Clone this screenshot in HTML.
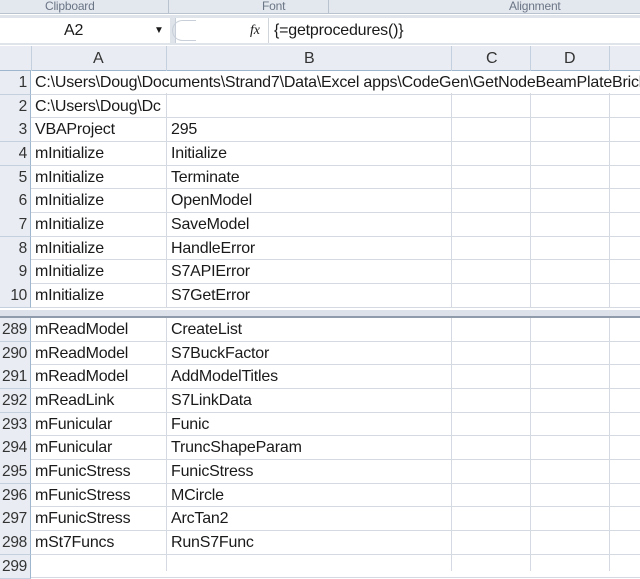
<!DOCTYPE html>
<html><head><meta charset="utf-8"><style>
*{margin:0;padding:0;box-sizing:border-box}
body{width:640px;height:571px;overflow:hidden;background:#fff;position:relative;font-family:"Liberation Sans",sans-serif;color:#1a1a1a}
.a{position:absolute}
.t{position:absolute;font-size:16px;white-space:nowrap;line-height:24px;letter-spacing:-0.2px}
.rh{position:absolute;left:0;width:31px;background:#e9edf3;border-right:1px solid #9eb6ce;border-bottom:1px solid #c5d0de;text-align:right;padding-right:3px;font-size:15.5px;color:#333;line-height:23px;letter-spacing:-0.3px}
.hl{position:absolute;left:31px;right:0;height:1px;background:#d4d9e2}
.vl{position:absolute;width:1px;background:#d4d9e2}
</style></head><body>
<div class="a" style="left:0;top:0;width:640px;height:14px;background:#e3e7ee;border-bottom:1px solid #b9c3d0"></div>
<div class="a" style="left:168px;top:0;width:1px;height:14px;background:#b9c3d0"></div>
<div class="a" style="left:328px;top:0;width:1px;height:14px;background:#b9c3d0"></div>
<div class="t" style="left:45px;top:-6px;font-size:12px;color:#6a7585">Clipboard</div>
<div class="t" style="left:262px;top:-6px;font-size:12px;color:#6a7585">Font</div>
<div class="t" style="left:509px;top:-6px;font-size:12px;color:#6a7585">Alignment</div>
<div class="a" style="left:0;top:15px;width:640px;height:30px;background:#dfe4eb"></div>
<div class="a" style="left:0;top:18px;width:170px;height:25px;background:#fff"></div>
<div class="t" style="left:64px;top:19px">A2</div>
<div class="t" style="left:154px;top:19px;font-size:10px">▼</div>
<div class="a" style="left:175px;top:18px;width:465px;height:25px;background:#fff;border-left:1px solid #c8cfd8"></div>
<div class="a" style="left:172px;top:20px;width:24px;height:21px;border:1px solid #c8cfd8;border-radius:11px 0 0 11px;border-right:none"></div>
<div class="t" style="left:250px;top:19px;font-style:italic;font-family:'Liberation Serif',serif;font-size:14px">fx</div>
<div class="a" style="left:268px;top:18px;width:1px;height:25px;background:#d0d5dc"></div>
<div class="t" style="left:274px;top:19px">{=getprocedures()}</div>
<div class="a" style="left:0;top:46px;width:640px;height:25px;background:#e9edf3;border-bottom:1px solid #9eb6ce"></div>
<div class="a" style="left:31px;top:46px;width:1px;height:25px;background:#c5d0de"></div>
<div class="a" style="left:166px;top:46px;width:1px;height:25px;background:#c5d0de"></div>
<div class="a" style="left:451px;top:46px;width:1px;height:25px;background:#c5d0de"></div>
<div class="a" style="left:530px;top:46px;width:1px;height:25px;background:#c5d0de"></div>
<div class="a" style="left:609px;top:46px;width:1px;height:25px;background:#c5d0de"></div>
<div class="t" style="left:93px;top:47px;color:#333">A</div>
<div class="t" style="left:304px;top:47px;color:#333">B</div>
<div class="t" style="left:486px;top:47px;color:#333">C</div>
<div class="t" style="left:564px;top:47px;color:#333">D</div>
<div class="vl" style="left:166px;top:71px;height:500px"></div>
<div class="vl" style="left:451px;top:71px;height:500px"></div>
<div class="vl" style="left:530px;top:71px;height:500px"></div>
<div class="vl" style="left:609px;top:71px;height:500px"></div>
<div class="a" style="left:0;top:308px;width:640px;height:9px;background:#fff"></div>
<div class="a" style="left:0;top:310px;width:640px;height:7px;background:#dde1ea"></div>
<div class="a" style="left:0;top:316px;width:640px;height:2px;background:#8f9aab"></div>
<div id="g"></div>
<script>
var r1=[["1","C:\\Users\\Doug\\Documents\\Strand7\\Data\\Excel apps\\CodeGen\\GetNodeBeamPlateBrick",""],["2","C:\\Users\\Doug\\Dc",""],["3","VBAProject","295"],["4","mInitialize","Initialize"],["5","mInitialize","Terminate"],["6","mInitialize","OpenModel"],["7","mInitialize","SaveModel"],["8","mInitialize","HandleError"],["9","mInitialize","S7APIError"],["10","mInitialize","S7GetError"]];
var r2=[["289","mReadModel","CreateList"],["290","mReadModel","S7BuckFactor"],["291","mReadModel","AddModelTitles"],["292","mReadLink","S7LinkData"],["293","mFunicular","Funic"],["294","mFunicular","TruncShapeParam"],["295","mFunicStress","FunicStress"],["296","mFunicStress","MCircle"],["297","mFunicStress","ArcTan2"],["298","mSt7Funcs","RunS7Func"],["299","",""]];
var h="",H=23.67;
function add(rows,y0){rows.forEach(function(r,i){var y=y0+i*H;
h+='<div class="rh" style="top:'+y+'px;height:'+(H+0.5)+'px">'+r[0]+'</div>';
h+='<div class="hl" style="top:'+(y+H-1)+'px"></div>';
if(r[0]=="1")h+='<div class="a" style="left:32px;top:'+y+'px;width:608px;height:22px;background:#fff"></div>';
if(r[0]=="2")h+='<div class="a" style="left:32px;top:'+y+'px;width:134px;height:22px;background:#fff;overflow:hidden"><div class="t" style="left:3px;top:0">'+r[1]+'</div></div>';
else h+='<div class="t" style="left:35px;top:'+y+'px">'+r[1]+'</div>';
h+='<div class="t" style="left:171px;top:'+y+'px">'+r[2]+'</div>';});}
add(r1,71);add(r2,318);
document.getElementById("g").innerHTML=h;
</script>
</body></html>
